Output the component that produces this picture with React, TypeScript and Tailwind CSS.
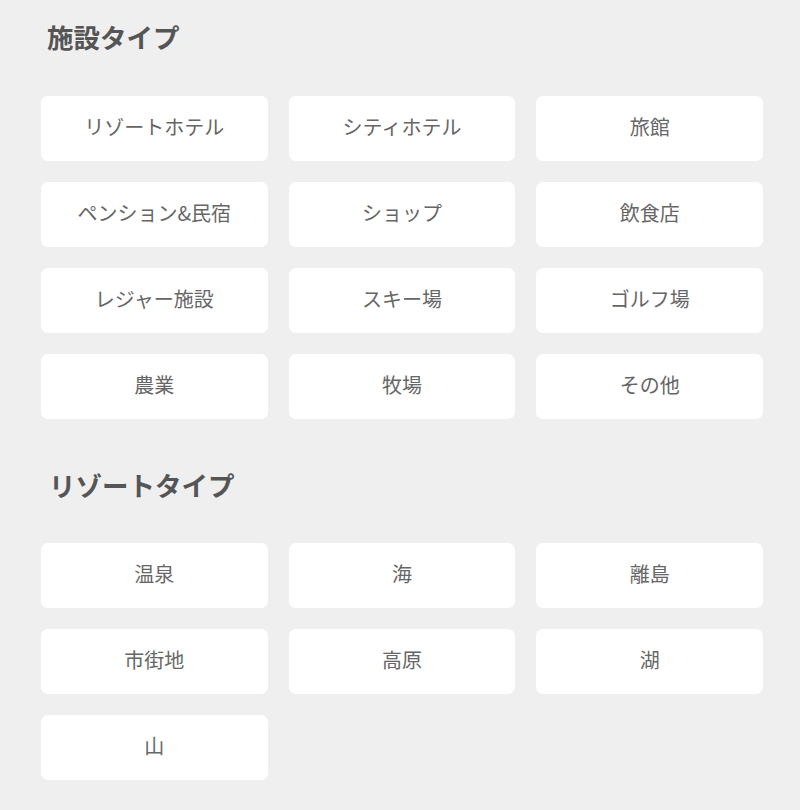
import React from 'react';

const facilityTypes = [
  'リゾートホテル',
  'シティホテル',
  '旅館',
  'ペンション&民宿',
  'ショップ',
  '飲食店',
  'レジャー施設',
  'スキー場',
  'ゴルフ場',
  '農業',
  '牧場',
  'その他',
];

const resortTypes = ['温泉', '海', '離島', '市街地', '高原', '湖', '山'];

const OptionGrid: React.FC<{ items: string[] }> = ({ items }) => (
  <div className="grid w-[722px] grid-cols-3 gap-[21px]">
    {items.map(item => (
      <button
        key={item}
        type="button"
        className="flex h-[65px] items-center justify-center rounded-[7px] bg-white pb-[3px] text-[20px] text-[#666666]"
      >
        {item}
      </button>
    ))}
  </div>
);

const App: React.FC = () => {
  return (
    <div
      className="min-h-[810px] bg-[#efefef] px-[41px] pt-[19px]"
      style={{ fontFamily: '"Noto Sans CJK JP", "Noto Sans", sans-serif' }}
    >
      <h2 className="pl-[6px] text-[26.5px] font-bold leading-[36px] text-[#555555]">施設タイプ</h2>
      <div className="mt-[41px]">
        <OptionGrid items={facilityTypes} />
      </div>

      <h2 className="mt-[48px] pl-[8px] text-[26.5px] font-bold leading-[36px] text-[#555555]">リゾートタイプ</h2>
      <div className="mt-[40px]">
        <OptionGrid items={resortTypes} />
      </div>
    </div>
  );
};

export default App;
